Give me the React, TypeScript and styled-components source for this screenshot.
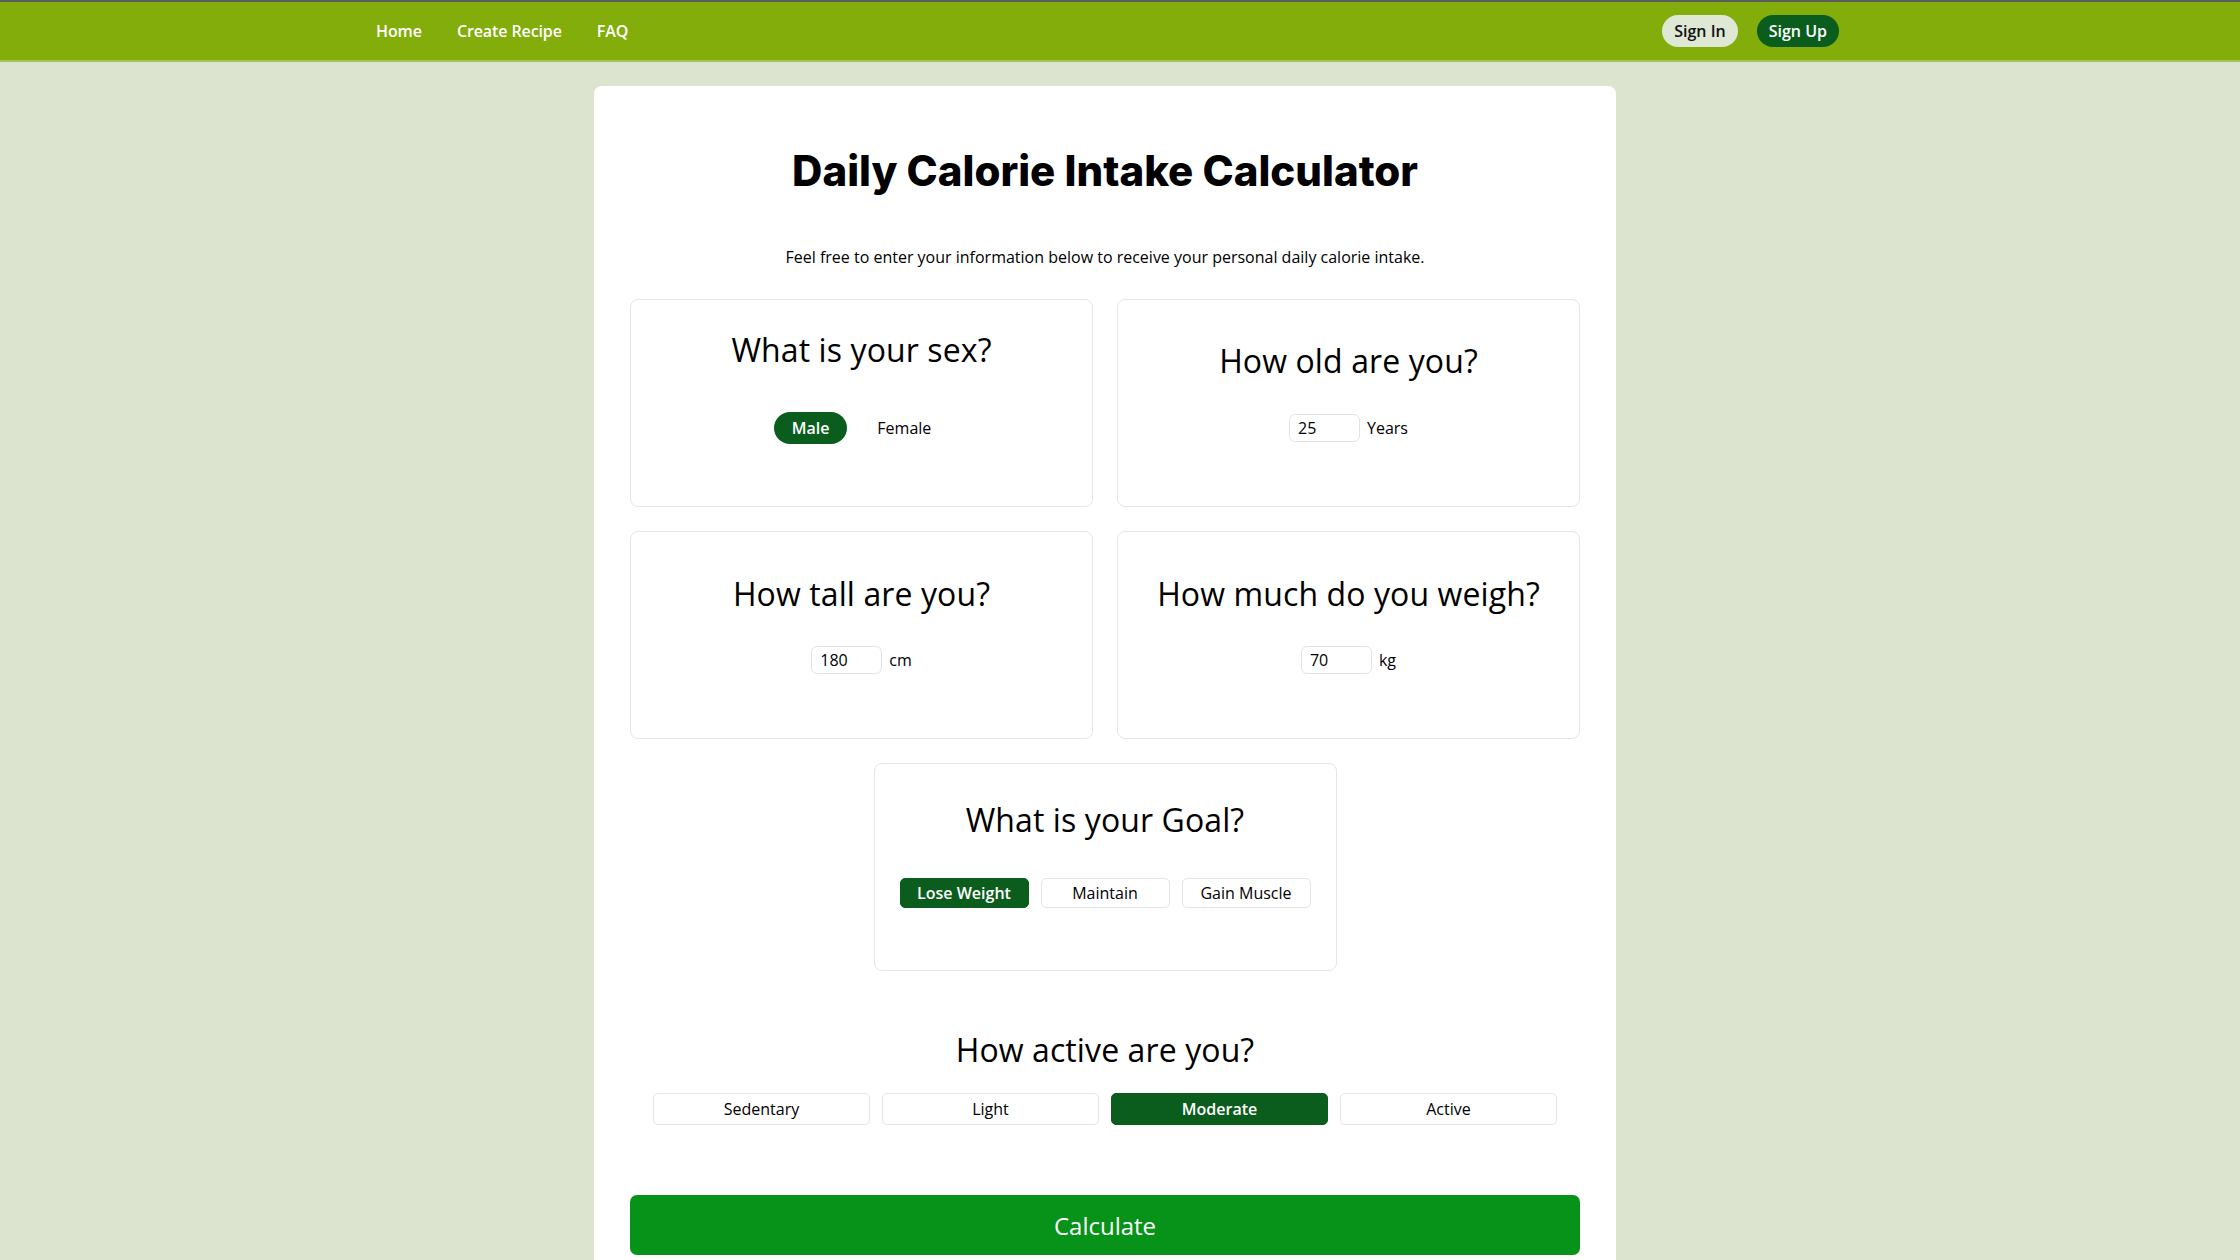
import React, { useState } from "react";
import styled, { createGlobalStyle, css } from "styled-components";

const GlobalStyle = createGlobalStyle`
  html, body {
    margin: 0;
    padding: 0;
    background: #dce4cf;
    font-family: "Open Sans", "Noto Sans", sans-serif;
    color: #000;
  }
  * { box-sizing: border-box; }
`;

const Page = styled.div`
  min-height: 1260px;
  background: #dce4cf;
`;

const NavBar = styled.header`
  height: 62px;
  padding-right: 25px;
  background: #82ad0b;
  border-top: 2px solid #5c5c5c;
  border-bottom: 2px solid #a6c452;
`;

const NavInner = styled.nav`
  width: 1463px;
  height: 100%;
  margin: 0 auto;
  display: flex;
  align-items: center;
  justify-content: space-between;
`;

const NavLinks = styled.div`
  display: flex;
  align-items: center;
  gap: 35px;
`;

const NavLink = styled.a`
  color: #fff;
  font-size: 16px;
  font-weight: 600;
  text-decoration: none;
  line-height: 22px;
  letter-spacing: -0.1px;
  cursor: pointer;
`;

const AuthGroup = styled.div`
  display: flex;
  align-items: center;
  gap: 19px;
`;

const AuthButton = styled.button<{ $primary?: boolean }>`
  height: 32px;
  padding: 0 12px;
  border: none;
  border-radius: 16px;
  font-family: inherit;
  font-size: 16px;
  font-weight: 600;
  cursor: pointer;
  background: ${(p) => (p.$primary ? "#0b5d1e" : "#dfe7d5")};
  color: ${(p) => (p.$primary ? "#fff" : "#111")};
`;

const Content = styled.div`
  padding: 24px 30px 0 0;
`;

const Main = styled.main`
  width: 1022px;
  margin: 0 auto;
  padding: 59px 36px 40px;
  background: #fff;
  border-radius: 8px;
`;

const Title = styled.h1`
  margin: 0;
  text-align: center;
  font-family: "Inter", "Noto Sans", sans-serif;
  font-weight: 800;
  font-size: 42px;
  line-height: 52px;
  letter-spacing: 0px;
  color: #000;
`;

const Subtitle = styled.p`
  margin: 48px 0 30px;
  text-align: center;
  font-size: 16px;
  line-height: 24px;
`;

const Grid = styled.div`
  display: grid;
  grid-template-columns: 1fr 1fr;
  gap: 24px;
`;

const QuestionCard = styled.section<{ $wide?: boolean }>`
  height: 208px;
  border: 1px solid #e6e6e6;
  border-radius: 8px;
  background: #fff;
  display: flex;
  flex-direction: column;
  align-items: center;
  ${(p) =>
    p.$wide &&
    css`
      grid-column: 1 / -1;
      justify-self: center;
      width: 463px;
    `}
`;

const QuestionHead = styled.div<{ $top: number }>`
  height: 112px;
  padding-top: ${(p) => p.$top}px;
  width: 100%;
`;

const QuestionTitle = styled.h2`
  margin: 0;
  text-align: center;
  font-size: 32px;
  font-weight: 400;
  line-height: 44px;
  letter-spacing: 0.1px;
`;

const ControlRow = styled.div<{ $gap: number; $offset?: number }>`
  height: 32px;
  margin-top: ${(p) => p.$offset ?? 0}px;
  display: flex;
  align-items: center;
  justify-content: center;
  gap: ${(p) => p.$gap}px;
`;

const PillButton = styled.button<{ $active?: boolean }>`
  height: 32px;
  padding: 0 18px;
  border: none;
  border-radius: 16px;
  font-family: inherit;
  font-size: 16px;
  cursor: pointer;
  background: ${(p) => (p.$active ? "#0b5d1e" : "transparent")};
  color: ${(p) => (p.$active ? "#fff" : "#000")};
  font-weight: ${(p) => (p.$active ? 600 : 400)};
`;

const NumberInput = styled.input`
  width: 71px;
  height: 28px;
  padding: 0 8px;
  border: 1px solid #e3e3e3;
  border-radius: 6px;
  font-family: inherit;
  font-size: 16px;
  color: #000;
  outline: none;
`;

const Unit = styled.span`
  font-size: 16px;
  line-height: 22px;
`;

const OptionButton = styled.button<{ $active?: boolean; $width: number; $height: number }>`
  width: ${(p) => p.$width}px;
  height: ${(p) => p.$height}px;
  border: 1px solid ${(p) => (p.$active ? "#0b5d1e" : "#e5e5e5")};
  border-radius: 5px;
  font-family: inherit;
  font-size: 16px;
  cursor: pointer;
  background: ${(p) => (p.$active ? "#0b5d1e" : "#fff")};
  color: ${(p) => (p.$active ? "#fff" : "#000")};
  font-weight: ${(p) => (p.$active ? 600 : 400)};
`;

const ActivitySection = styled.section`
  margin-top: 57px;
  display: flex;
  flex-direction: column;
  align-items: center;
`;

const ActivityRow = styled.div`
  margin-top: 21px;
  display: grid;
  grid-template-columns: repeat(4, 217px);
  gap: 12px;
`;

const CalculateButton = styled.button`
  display: block;
  width: 100%;
  height: 60px;
  margin-top: 70px;
  border: none;
  border-radius: 7px;
  background: #07921a;
  color: #fff;
  font-family: inherit;
  font-size: 24px;
  font-weight: 500;
  cursor: pointer;
`;

const goals = ["Lose Weight", "Maintain", "Gain Muscle"];
const activities = ["Sedentary", "Light", "Moderate", "Active"];

export default function App() {
  const [sex, setSex] = useState("Male");
  const [goal, setGoal] = useState("Lose Weight");
  const [activity, setActivity] = useState("Moderate");
  const [age, setAge] = useState("25");
  const [height, setHeight] = useState("180");
  const [weight, setWeight] = useState("70");

  return (
    <Page>
      <GlobalStyle />
      <NavBar>
        <NavInner>
          <NavLinks>
            <NavLink>Home</NavLink>
            <NavLink>Create Recipe</NavLink>
            <NavLink>FAQ</NavLink>
          </NavLinks>
          <AuthGroup>
            <AuthButton>Sign In</AuthButton>
            <AuthButton $primary>Sign Up</AuthButton>
          </AuthGroup>
        </NavInner>
      </NavBar>
      <Content>
        <Main>
          <Title>Daily Calorie Intake Calculator</Title>
          <Subtitle>
            Feel free to enter your information below to receive your personal daily calorie intake.
          </Subtitle>
          <Grid>
            <QuestionCard>
              <QuestionHead $top={28}>
                <QuestionTitle>What is your sex?</QuestionTitle>
              </QuestionHead>
              <ControlRow $gap={12}>
                {["Male", "Female"].map((s) => (
                  <PillButton key={s} $active={sex === s} onClick={() => setSex(s)}>
                    {s}
                  </PillButton>
                ))}
              </ControlRow>
            </QuestionCard>
            <QuestionCard>
              <QuestionHead $top={39}>
                <QuestionTitle>How old are you?</QuestionTitle>
              </QuestionHead>
              <ControlRow $gap={7}>
                <NumberInput value={age} onChange={(e) => setAge(e.target.value)} />
                <Unit>Years</Unit>
              </ControlRow>
            </QuestionCard>
            <QuestionCard>
              <QuestionHead $top={40}>
                <QuestionTitle>How tall are you?</QuestionTitle>
              </QuestionHead>
              <ControlRow $gap={7}>
                <NumberInput value={height} onChange={(e) => setHeight(e.target.value)} />
                <Unit>cm</Unit>
              </ControlRow>
            </QuestionCard>
            <QuestionCard>
              <QuestionHead $top={40}>
                <QuestionTitle>How much do you weigh?</QuestionTitle>
              </QuestionHead>
              <ControlRow $gap={7}>
                <NumberInput value={weight} onChange={(e) => setWeight(e.target.value)} />
                <Unit>kg</Unit>
              </ControlRow>
            </QuestionCard>
            <QuestionCard $wide>
              <QuestionHead $top={34}>
                <QuestionTitle>What is your Goal?</QuestionTitle>
              </QuestionHead>
              <ControlRow $gap={12} $offset={1}>
                {goals.map((g) => (
                  <OptionButton
                    key={g}
                    $width={129}
                    $height={30}
                    $active={goal === g}
                    onClick={() => setGoal(g)}
                  >
                    {g}
                  </OptionButton>
                ))}
              </ControlRow>
            </QuestionCard>
          </Grid>
          <ActivitySection>
            <QuestionTitle>How active are you?</QuestionTitle>
            <ActivityRow>
              {activities.map((a) => (
                <OptionButton
                  key={a}
                  $width={217}
                  $height={32}
                  $active={activity === a}
                  onClick={() => setActivity(a)}
                >
                  {a}
                </OptionButton>
              ))}
            </ActivityRow>
          </ActivitySection>
          <CalculateButton>Calculate</CalculateButton>
        </Main>
      </Content>
    </Page>
  );
}
